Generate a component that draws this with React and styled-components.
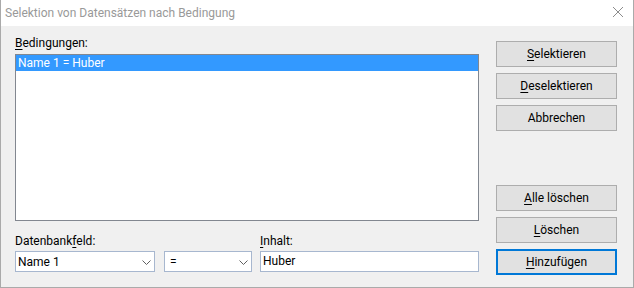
import React from 'react';
import styled, { createGlobalStyle } from 'styled-components';

const GlobalStyle = createGlobalStyle`
    html, body {
        margin: 0;
        padding: 0;
        background: #f0f0f0;
    }
    body {
        font-family: "Segoe UI", Roboto, "Noto Sans", sans-serif;
        font-size: 12px;
        color: #000;
    }
`;

const Window = styled.div`
    width: 634px;
    height: 288px;
    box-sizing: border-box;
    border: 1px solid #aaaaaa;
    border-top: none;
    background: #f0f0f0;
    display: flex;
    flex-direction: column;
`;

const TitleBar = styled.div`
    height: 26px;
    flex-shrink: 0;
    background: #fff;
    display: flex;
    align-items: center;
    justify-content: space-between;
    padding: 0 10px 0 4px;
`;

const Title = styled.span`
    color: #999;
    font-size: 12px;
    line-height: 16px;
    margin-top: -1px;
`;

const CloseIcon = styled.svg`
    width: 10px;
    height: 10px;
    margin-top: -2px;
`;

const Body = styled.div`
    flex: 1;
    display: grid;
    grid-template-columns: 464px 121px;
    column-gap: 17px;
    padding: 0 16px 0 14px;
`;

const LeftColumn = styled.div`
    display: flex;
    flex-direction: column;
    padding-top: 9px;
`;

const Label = styled.label`
    display: block;
    line-height: 16px;
    height: 16px;
    white-space: nowrap;
`;

const Key = styled.span`
    text-decoration: underline;
    text-underline-offset: 2px;
`;

const ListBox = styled.div`
    margin-top: 3px;
    height: 167px;
    box-sizing: border-box;
    border: 1px solid #828790;
    background: #fff;
`;

const ListItem = styled.div`
    height: 16px;
    line-height: 16px;
    padding-left: 2px;
    background: ${p => (p.selected ? '#3399ff' : 'transparent')};
    color: ${p => (p.selected ? '#fff' : '#000')};
`;

const Fields = styled.div`
    margin-top: 12px;
    display: grid;
    grid-template-columns: 140px 88px 219px;
    column-gap: 9px;
    grid-template-rows: 16px 21px;
    row-gap: 2px;
    & > :nth-child(3) {
        margin-left: -1px;
    }
    & > :nth-child(6) {
        margin-left: -1px;
        width: 219px;
    }
`;

const Combo = styled.div`
    height: 21px;
    box-sizing: border-box;
    border: 1px solid #a7b7cf;
    background: #fff;
    display: flex;
    align-items: center;
    justify-content: space-between;
    padding: 0 3px 0 2px;
    line-height: 16px;
`;

const Chevron = styled.svg`
    width: 9px;
    height: 5px;
    margin-top: 1px;
`;

const TextBox = styled.div`
    height: 21px;
    box-sizing: border-box;
    border: 1px solid #a7b7cf;
    background: #fff;
    padding: 0 2px;
    line-height: 19px;
`;

const RightColumn = styled.div`
    display: flex;
    flex-direction: column;
    padding-top: 15px;
`;

const ButtonGroup = styled.div`
    display: flex;
    flex-direction: column;
    gap: 6px;
    margin-top: ${p => p.offset || 0}px;
`;

const Button = styled.button`
    height: 26px;
    width: 121px;
    box-sizing: border-box;
    background: #e1e1e1;
    border: ${p => (p.isDefault ? '2px solid #0078d7' : '1px solid #adadad')};
    font-family: inherit;
    font-size: 12px;
    color: #000;
    padding: 0;
    line-height: 16px;
`;

function ChevronDown() {
    return (
        <Chevron viewBox="0 0 9 5">
            <polyline points="0.5,0.5 4.5,4.5 8.5,0.5" fill="none" stroke="#606060" strokeWidth="1" />
        </Chevron>
    );
}

export default function App() {
    return (
        <>
            <GlobalStyle />
            <Window>
                <TitleBar>
                    <Title>Selektion von Datensätzen nach Bedingung</Title>
                    <CloseIcon viewBox="0 0 10 10">
                        <path d="M0 0 L10 10 M10 0 L0 10" stroke="#8c8c8c" strokeWidth="1" />
                    </CloseIcon>
                </TitleBar>
                <Body>
                    <LeftColumn>
                        <Label><Key>B</Key>edingungen:</Label>
                        <ListBox>
                            <ListItem selected>Name 1 = Huber</ListItem>
                        </ListBox>
                        <Fields>
                            <Label>Datenbank<Key>f</Key>eld:</Label>
                            <span />
                            <Label><Key>I</Key>nhalt:</Label>
                            <Combo>
                                <span>Name 1</span>
                                <ChevronDown />
                            </Combo>
                            <Combo>
                                <span>&nbsp;=</span>
                                <ChevronDown />
                            </Combo>
                            <TextBox>Huber</TextBox>
                        </Fields>
                    </LeftColumn>
                    <RightColumn>
                        <ButtonGroup>
                            <Button><Key>S</Key>elektieren</Button>
                            <Button><Key>D</Key>eselektieren</Button>
                            <Button>Abbrechen</Button>
                        </ButtonGroup>
                        <ButtonGroup offset={54}>
                            <Button><Key>A</Key>lle löschen</Button>
                            <Button><Key>L</Key>öschen</Button>
                            <Button isDefault><Key>H</Key>inzufügen</Button>
                        </ButtonGroup>
                    </RightColumn>
                </Body>
            </Window>
        </>
    );
}
